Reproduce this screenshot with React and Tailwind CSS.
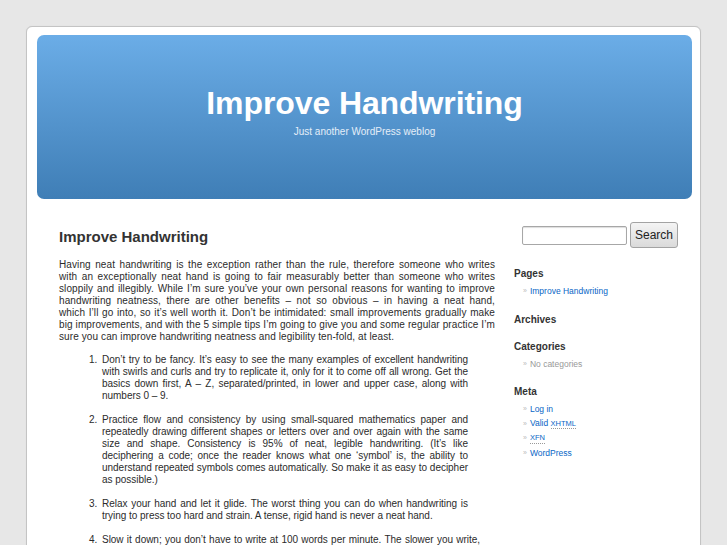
import React from "react";

const items = [
  "Don’t try to be fancy. It’s easy to see the many examples of excellent handwriting with swirls and curls and try to replicate it, only for it to come off all wrong. Get the basics down first, A – Z, separated/printed, in lower and upper case, along with numbers 0 – 9.",
  "Practice flow and consistency by using small-squared mathematics paper and repeatedly drawing different shapes or letters over and over again with the same size and shape. Consistency is 95% of neat, legible handwriting. (It’s like deciphering a code; once the reader knows what one ‘symbol’ is, the ability to understand repeated symbols comes automatically. So make it as easy to decipher as possible.)",
  "Relax your hand and let it glide. The worst thing you can do when handwriting is trying to press too hard and strain. A tense, rigid hand is never a neat hand.",
  "Slow it down; you don’t have to write at 100 words per minute. The slower you write, the more control you have over the shape of every letter, and the neater the result will be.",
];

function Widget({ title, children }) {
  return (
    <li className="mb-[15px]">
      <h2 className="text-[10px] font-bold leading-[12px] text-[#333]">{title}</h2>
      {children && <ul className="mt-[4px] ml-[9px]">{children}</ul>}
    </li>
  );
}

function Item({ children }) {
  return (
    <li className="flex h-[14.5px] items-center gap-[3px] text-[8.5px] leading-[10px]">
      <span className="text-[7px] text-[#bbb]">»</span>
      {children}
    </li>
  );
}

export default function App() {
  return (
    <div className="min-h-[545px] bg-[#e7e7e7] pt-[26px] font-['Liberation_Sans',Arial,sans-serif] text-[#333]">
      <div className="mx-auto w-[675px] min-h-[600px] rounded-t-[6px] border border-[#c4c4c4] bg-white shadow-[0_0_1px_#d0d0d0]">
        <header className="ml-[10px] mr-[8px] mt-[8px] flex h-[164px] flex-col items-center rounded-[7px] bg-gradient-to-b from-[#6badE7] to-[#3f7eb6] pt-[49px] text-white">
          <h1 className="text-[32px] font-bold leading-[38px] tracking-[-0.1px]">Improve Handwriting</h1>
          <p className="mt-[4px] text-[10px] leading-[12px] text-[#e4eef8]">Just another WordPress weblog</p>
        </header>

        <div className="flex">
          <main className="ml-[32px] w-[436px] pt-[29px]">
            <h2 className="text-[15px] font-bold leading-[18px] text-[#333]">Improve Handwriting</h2>
            <div className="mt-[13px] text-justify text-[10px] leading-[12px] text-[#2b2b2b]">
              <p className="mb-[11px] tracking-[0.1px]">
                Having neat handwriting is the exception rather than the rule, therefore someone who writes with an exceptionally neat hand is going to fair measurably better than someone who writes sloppily and illegibly. While I’m sure you’ve your own personal reasons for wanting to improve handwriting neatness, there are other benefits – not so obvious – in having a neat hand,{" "}
                <span className="whitespace-nowrap">which I’ll</span> go into, so it’s well worth it. Don’t be intimidated: small improvements gradually make big improvements, and with the 5 simple tips I’m going to give you and some regular practice I’m sure you can improve handwriting neatness and legibility ten-fold, at least.
              </p>
              <ol className="mr-[27px] list-decimal pl-[41px] tracking-[-0.03px]">
                {items.map((t, i) => (
                  <li key={i} className={i === 3 ? "mb-[12px] mr-[-12px] pl-[2px]" : "mb-[12px] pl-[2px]"}>
                    {t}
                  </li>
                ))}
              </ol>
            </div>
          </main>

          <aside className="ml-[19px] w-[170px] pt-[23px]">
            <form className="flex items-center pl-[8px]" onSubmit={(e) => e.preventDefault()}>
              <input
                type="text"
                className="h-[19px] w-[105px] rounded-[2px] border border-[#a7a7a7] bg-white shadow-[inset_0_1px_1px_#ddd] outline-none"
              />
              <button
                type="submit"
                className="ml-[3px] h-[26px] w-[48px] rounded-[3px] border border-[#a3a3a3] bg-gradient-to-b from-[#f4f4f4] to-[#dadada] text-[12px] leading-[14px] text-[#222]"
              >
                Search
              </button>
            </form>
            <ul className="mt-[20px]">
              <Widget title="Pages">
                <Item>
                  <a className="text-[#0866c6]">Improve Handwriting</a>
                </Item>
              </Widget>
              <Widget title="Archives" />
              <Widget title="Categories">
                <Item>
                  <span className="text-[#999]">No categories</span>
                </Item>
              </Widget>
              <Widget title="Meta">
                <Item>
                  <a className="text-[#0866c6]">Log in</a>
                </Item>
                <Item>
                  <a className="text-[#0866c6]">
                    Valid{" "}
                    <abbr className="border-b border-dotted border-[#999] text-[7.5px] no-underline">XHTML</abbr>
                  </a>
                </Item>
                <Item>
                  <a className="border-b border-dotted border-[#999] text-[7.5px] text-[#0866c6]">XFN</a>
                </Item>
                <Item>
                  <a className="text-[#0866c6]">WordPress</a>
                </Item>
              </Widget>
            </ul>
          </aside>
        </div>
      </div>
    </div>
  );
}
